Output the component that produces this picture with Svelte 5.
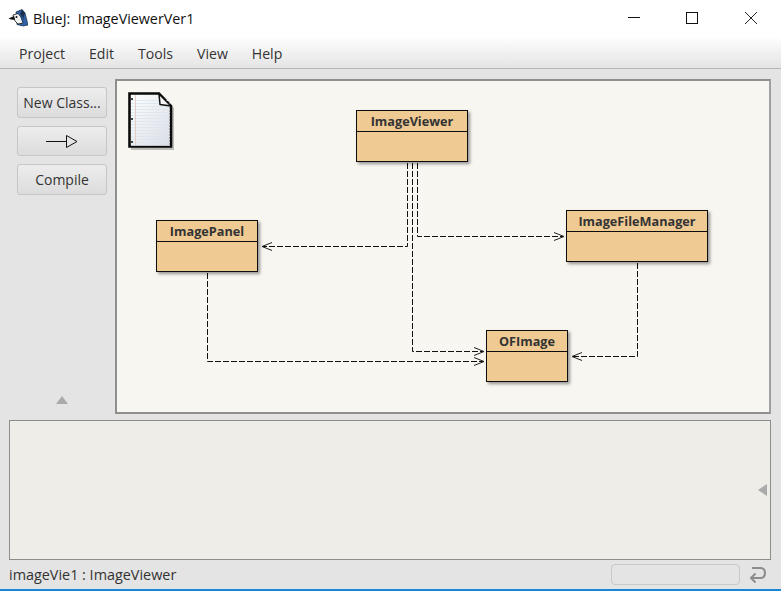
<script>
  const classes = [
    { name: 'ImageViewer', x: 356, y: 110, w: 112, h: 52 },
    { name: 'ImagePanel', x: 156, y: 220, w: 102, h: 52 },
    { name: 'ImageFileManager', x: 566, y: 210, w: 142, h: 52 },
    { name: 'OFImage', x: 486, y: 330, w: 82, h: 52 }
  ];
  const lines = [
    '407.5,163 407.5,246.5 262,246.5',
    '417.5,163 417.5,236.5 564,236.5',
    '412.5,163 412.5,351.5 484,351.5',
    '207.5,273 207.5,361.5 484,361.5',
    '637.5,263 637.5,356.5 572,356.5'
  ];
  const heads = [
    '272,242.5 262,246.5 272,250.5',
    '554,232.5 564,236.5 554,240.5',
    '474,347.5 484,351.5 474,355.5',
    '474,357.5 484,361.5 474,365.5',
    '582,352.5 572,356.5 582,360.5'
  ];
  const menus = ['Project', 'Edit', 'Tools', 'View', 'Help'];
  const ruled = [100, 103, 106, 109, 112, 115, 118, 121, 124, 127, 130, 133, 136, 139, 142, 145];
</script>

<div class="window">
  <header class="titlebar">
    <svg class="bird" width="20" height="18" viewBox="0 0 20 18">
      <path d="M8 3 L14 0.500 L17 4 L20 16 L15 17 L9 15.500Z" fill="#2f62a6" stroke="#16263f" stroke-width="0.700" />
      <path d="M14 0.500 L17 4 L15.500 9 L12 5Z" fill="#1b2f50" />
      <path d="M5 6 L10 4.500 L13 8 L15 14 L10 15 L7 12Z" fill="#f2f2f2" stroke="#1a1a1a" stroke-width="0.800" />
      <path d="M0.500 9.500 L6 7 L7 11 L3 10.500Z" fill="#111" />
      <circle cx="8.500" cy="8" r="1" fill="#111" />
      <path d="M12 7 L15.500 9 L15 14Z" fill="#26497c" />
    </svg>
    <span class="title">BlueJ:&nbsp; ImageViewerVer1</span>
    <div class="winctl">
      <svg width="178" height="38" viewBox="0 0 178 38">
        <path d="M25 17.500H37" stroke="#111" fill="none" />
        <rect x="83.500" y="12.500" width="11" height="11" stroke="#111" fill="none" />
        <path d="M142 12L154 24M154 12L142 24" stroke="#222" fill="none" />
      </svg>
    </div>
  </header>

  <nav class="menubar">
    {#each menus as m}
      <span>{m}</span>
    {/each}
  </nav>

  <main class="main">
    <aside class="tools">
      <button>New Class...</button>
      <button class="arrow" aria-label="Uses arrow">
        <svg width="32" height="14" viewBox="0 0 32 14">
          <path d="M0 7.500H20" stroke="#111" fill="none" />
          <path d="M20.500 1.500L31 7.500L20.500 13.500Z" stroke="#111" fill="none" />
        </svg>
      </button>
      <button>Compile</button>
      <div class="grow"></div>
      <svg class="up" width="12" height="8" viewBox="0 0 12 8"><path d="M6 0L12 8H0Z" fill="#aaa" /></svg>
    </aside>

    <section class="canvas">
      <svg class="note" width="48" height="60" viewBox="0 0 48 60">
        <defs>
          <linearGradient id="paper" x1="0" y1="0" x2="1" y2="1">
            <stop offset="0" stop-color="#ffffff" />
            <stop offset="1" stop-color="#d9dde4" />
          </linearGradient>
        </defs>
        <path d="M3 3H33L46 16V58H3Z" fill="#777" opacity="0.45" />
        <path d="M1.500 1.500H31L43 14V54.500H1.500Z" fill="url(#paper)" stroke="#0a0a0a" stroke-width="2.600" />
        {#each ruled as y}
          <path d="M3 {y - 91.500}H42" stroke="#dbe4f0" stroke-width="0.800" />
        {/each}
        <path d="M7.500 3V53" stroke="#e3cfc8" />
        <rect x="3" y="6" width="2" height="2" fill="#444" />
        <rect x="3" y="26" width="2" height="2" fill="#444" />
        <rect x="3" y="49" width="2" height="2" fill="#444" />
        <path d="M31 2L32 12.500L43 14Z" fill="#f4f4f4" stroke="#111" stroke-width="1.500" stroke-linejoin="round" />
      </svg>
    </section>

    <svg class="wires" width="781" height="420" viewBox="0 0 781 420">
      {#each lines as p}
        <polyline points={p} fill="none" stroke="#111" stroke-dasharray="6 2" />
      {/each}
      {#each heads as p}
        <polyline points={p} fill="none" stroke="#222" />
      {/each}
    </svg>

    {#each classes as c}
      <div class="cls" style="left:{c.x}px;top:{c.y - 69}px;width:{c.w}px;height:{c.h}px">
        <div class="cname">{c.name}</div>
      </div>
    {/each}
  </main>

  <section class="terminal">
    <svg class="left" width="9" height="12" viewBox="0 0 9 12"><path d="M0 6L9 0V12Z" fill="#aaa" /></svg>
  </section>

  <footer class="status">
    <span class="label">imageVie1 : ImageViewer</span>
    <div class="field"></div>
    <svg class="undo" width="18" height="17" viewBox="0 0 18 17">
      <path d="M3 2H11.500C14.500 2 16 4 16 7C16 10 14.500 12 11.500 12H3" fill="none" stroke="#8c8c8c" stroke-width="2" />
      <path d="M6.500 7.500L2 12L6.500 16.500" fill="none" stroke="#8c8c8c" stroke-width="2" />
    </svg>
  </footer>
  <div class="taskline"></div>
</div>

<style>
  :global(body) {
    margin: 0;
    background: #e4e4e4;
  }
  .window {
    width: 781px;
    height: 591px;
    display: flex;
    flex-direction: column;
    overflow: hidden;
    background: #e4e4e4;
    font-family: "Open Sans", "Noto Sans", sans-serif;
    color: #333;
    font-size: 14px;
  }
  .titlebar {
    height: 38px;
    flex: none;
    background: #fff;
    display: flex;
    align-items: center;
    padding-left: 8px;
    color: #111;
  }
  .bird {
    margin-right: 5px;
    margin-top: -2px;
  }
  .title {
    font-size: 14.3px;
    margin-top: -1px;
  }
  .winctl {
    margin-left: auto;
    height: 38px;
  }
  .winctl svg {
    display: block;
  }
  .menubar {
    height: 30px;
    flex: none;
    display: flex;
    align-items: center;
    padding-left: 19px;
    gap: 24px;
    background: linear-gradient(#fdfdfd, #e4e4e4);
    border-bottom: 1px solid #b4b4b4;
    font-size: 14.1px;
  }
  .main {
    position: relative;
    height: 351px;
    flex: none;
    display: flex;
    padding: 10px 10px 6px 17px;
    box-sizing: border-box;
    gap: 8px;
  }
  .tools {
    width: 90px;
    flex: none;
    display: flex;
    flex-direction: column;
    gap: 8px;
    padding-top: 8px;
    padding-bottom: 3px;
    align-items: center;
    box-sizing: border-box;
  }
  button {
    width: 90px;
    height: 31px;
    padding: 0;
    flex: none;
    border: 1px solid #c6c6c6;
    border-radius: 3px;
    background: linear-gradient(#ededed, #dcdcdc);
    font: inherit;
    color: #333;
    display: flex;
    align-items: center;
    justify-content: center;
  }
  .arrow {
    height: 30px;
  }
  .grow {
    flex: 1;
  }
  .up {
    display: block;
    margin-bottom: 7px;
  }
  .canvas {
    width: 656px;
    flex: none;
    height: 335px;
    box-sizing: border-box;
    background: #f7f6f1;
    border: 2px solid #8f8f8f;
    border-right-color: #a0a0a0;
    padding: 11px;
  }
  .note {
    display: block;
  }
  .wires {
    position: absolute;
    left: 0;
    top: -69px;
    pointer-events: none;
  }
  .cls {
    position: absolute;
    box-sizing: border-box;
    background: #efca93;
    border: 1px solid #0d0d0d;
    box-shadow: 2px 2px 3px rgba(0, 0, 0, 0.4);
  }
  .cname {
    height: 21px;
    box-sizing: border-box;
    border-bottom: 1px solid #0d0d0d;
    text-align: center;
    font-size: 12.7px;
    font-weight: 700;
    line-height: 20px;
    color: #333;
  }
  .terminal {
    flex: none;
    height: 140px;
    margin: 0 10px 0 9px;
    box-sizing: border-box;
    background: #eeede8;
    border: 1px solid #8c8c8c;
    display: flex;
    align-items: center;
    justify-content: flex-end;
    padding-right: 3px;
  }
  .left {
    display: block;
  }
  .status {
    height: 29px;
    flex: none;
    display: flex;
    align-items: center;
    padding: 0 14px 0 9px;
    font-size: 14.4px;
    color: #333;
  }
  .field {
    margin-left: auto;
    width: 129px;
    height: 21px;
    box-sizing: border-box;
    border: 1px solid #c8c8c8;
    border-radius: 4px;
    background: #e4e4e4;
  }
  .undo {
    margin-left: 9px;
    display: block;
  }
  .taskline {
    height: 2px;
    flex: none;
    background: #1a86d8;
  }
</style>
